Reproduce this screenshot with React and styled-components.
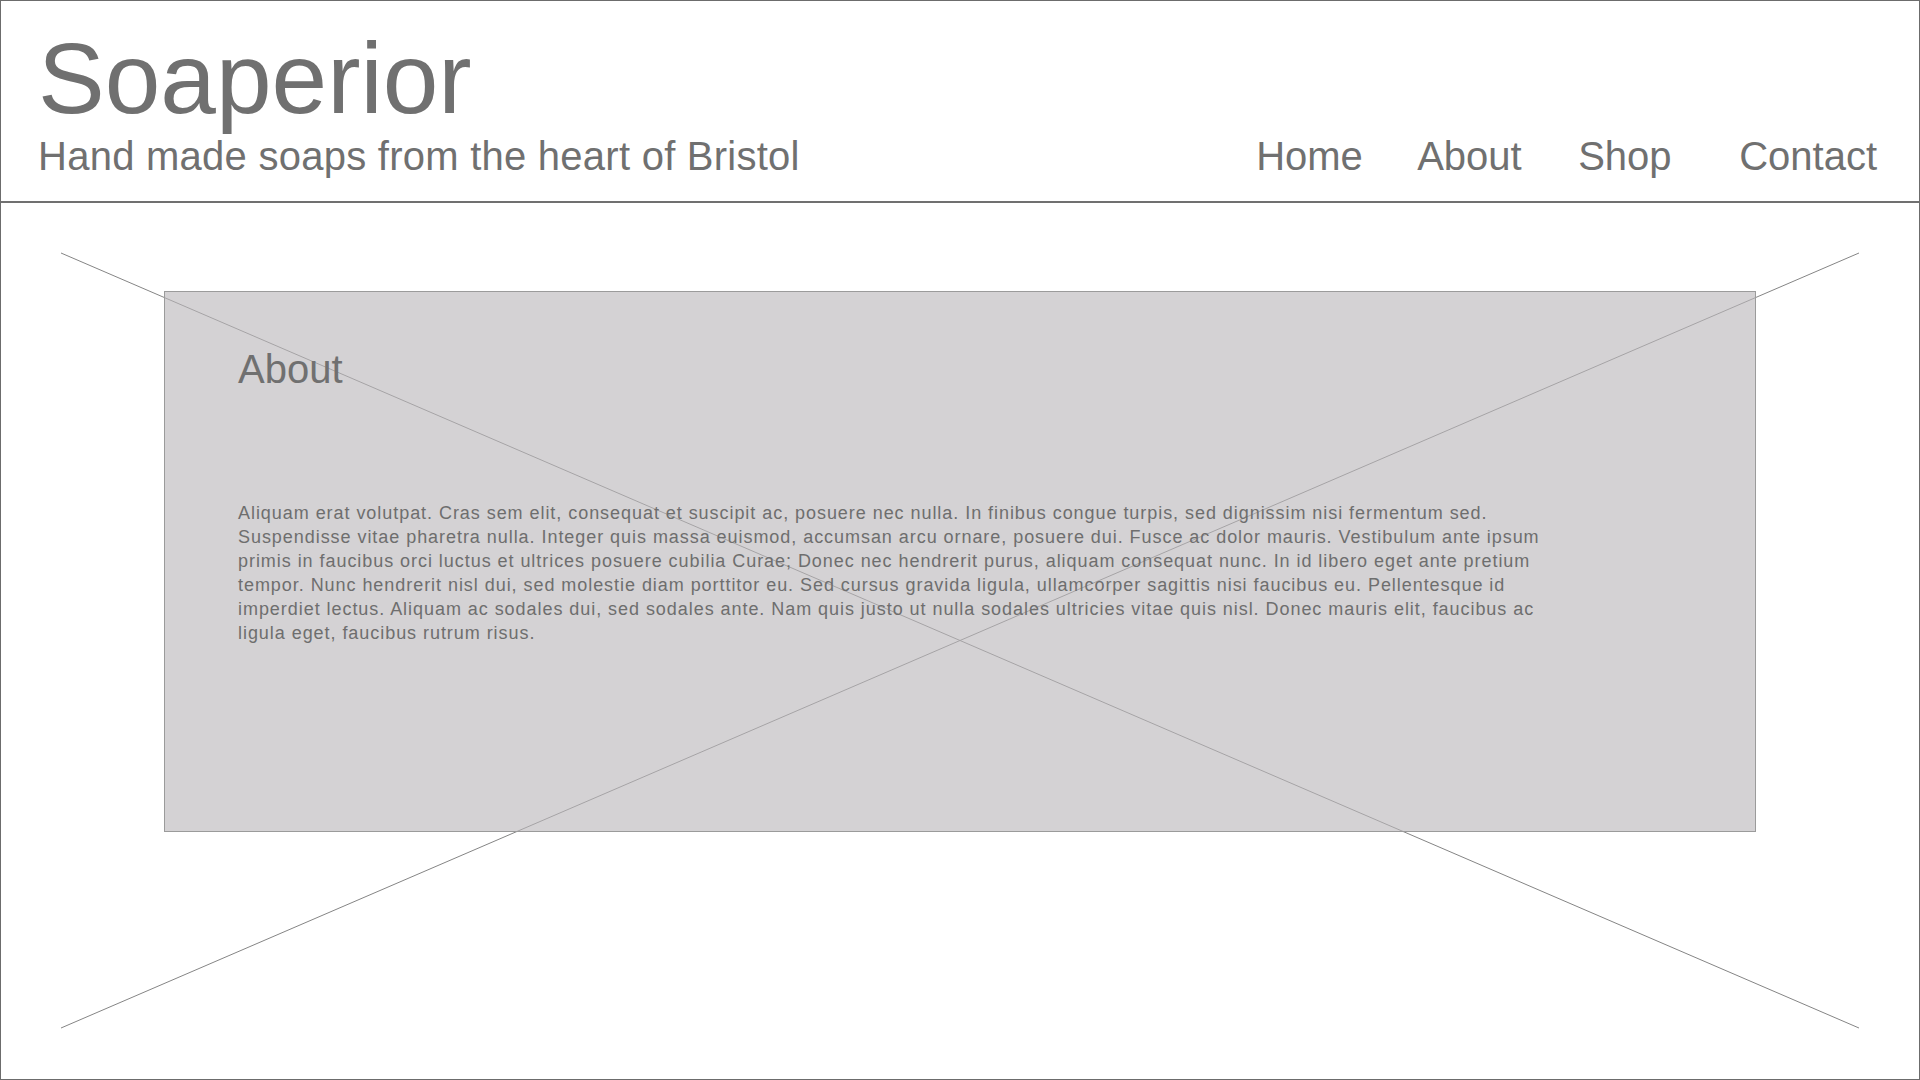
import React from 'react';
import styled, { createGlobalStyle } from 'styled-components';

const GlobalStyle = createGlobalStyle`
  * {
    box-sizing: border-box;
  }
  html, body {
    margin: 0;
    padding: 0;
    background: #ffffff;
  }
  body {
    font-family: 'Liberation Sans', Arial, Helvetica, sans-serif;
    color: #707070;
  }
`;

// --- Layout ---
const Frame = styled.div`
  width: 1920px;
  min-height: 1080px;
  border: 1px solid #6c6c6c;
  display: flex;
  flex-direction: column;
`;

const Header = styled.header`
  display: flex;
  justify-content: space-between;
  align-items: flex-end;
  padding: 27px 42px 22px 37px;
  border-bottom: 2px solid #707070;
`;

const Brand = styled.div`
  display: flex;
  flex-direction: column;
  gap: 5px;
`;

const Logo = styled.h1`
  margin: 0;
  font-size: 100px;
  line-height: 100px;
  font-weight: 400;
  color: #707070;
`;

const Tagline = styled.p`
  margin: 0;
  font-size: 40px;
  line-height: 46px;
  letter-spacing: 0.25px;
  color: #707070;
`;

const Nav = styled.nav`
  display: grid;
  grid-template-columns: repeat(3, 161px) auto;
`;

const NavLink = styled.a`
  font-size: 40px;
  line-height: 46px;
  color: #707070;
  text-decoration: none;
  cursor: pointer;
`;

// --- Hero with image placeholder ---
const Hero = styled.main`
  flex: 1;
  display: flex;
  padding: 50px 60px 51px 60px;
`;

const Placeholder = styled.div`
  position: relative;
  flex: 1;
  padding: 38px 103px 0;
`;

const Cross = styled.svg`
  position: absolute;
  inset: 0;
  width: 100%;
  height: 100%;
  overflow: visible;
`;

const Panel = styled.section`
  position: relative;
  height: 541px;
  border: 1px solid #9b9b9b;
  background: rgba(185, 183, 185, 0.62);
  padding: 54px 73px 0;
`;

const PanelTitle = styled.h2`
  margin: 0 0 109px;
  font-size: 40px;
  line-height: 46px;
  font-weight: 400;
  color: #707070;
`;

const PanelText = styled.p`
  margin: 0;
  max-width: 1322px;
  font-size: 18px;
  line-height: 24px;
  letter-spacing: 0.95px;
  color: #6e6e6e;
`;

const navItems = ['Home', 'About', 'Shop', 'Contact'];

const App = () => {
  return (
    <>
      <GlobalStyle />
      <Frame>
        <Header>
          <Brand>
            <Logo>Soaperior</Logo>
            <Tagline>Hand made soaps from the heart of Bristol</Tagline>
          </Brand>
          <Nav>
            {navItems.map((item) => (
              <NavLink key={item}>{item}</NavLink>
            ))}
          </Nav>
        </Header>

        <Hero>
          <Placeholder>
            <Cross preserveAspectRatio="none" viewBox="0 0 100 100">
              <line x1="0" y1="0" x2="100" y2="100" stroke="#858585" strokeWidth="1" vectorEffect="non-scaling-stroke" />
              <line x1="100" y1="0" x2="0" y2="100" stroke="#858585" strokeWidth="1" vectorEffect="non-scaling-stroke" />
            </Cross>
            <Panel>
              <PanelTitle>About</PanelTitle>
              <PanelText>
                Aliquam erat volutpat. Cras sem elit, consequat et suscipit ac, posuere nec nulla. In finibus congue turpis, sed dignissim nisi fermentum sed. Suspendisse vitae pharetra nulla. Integer quis massa euismod, accumsan arcu ornare, posuere dui. Fusce ac dolor mauris. Vestibulum ante ipsum primis in faucibus orci luctus et ultrices posuere cubilia Curae; Donec nec hendrerit purus, aliquam consequat nunc. In id libero eget ante pretium tempor. Nunc hendrerit nisl dui, sed molestie diam porttitor eu. Sed cursus gravida ligula, ullamcorper sagittis nisi faucibus eu. Pellentesque id imperdiet lectus. Aliquam ac sodales dui, sed sodales ante. Nam quis justo ut nulla sodales ultricies vitae quis nisl. Donec mauris elit, faucibus ac ligula eget, faucibus rutrum risus.
              </PanelText>
            </Panel>
          </Placeholder>
        </Hero>
      </Frame>
    </>
  );
};

export default App;
